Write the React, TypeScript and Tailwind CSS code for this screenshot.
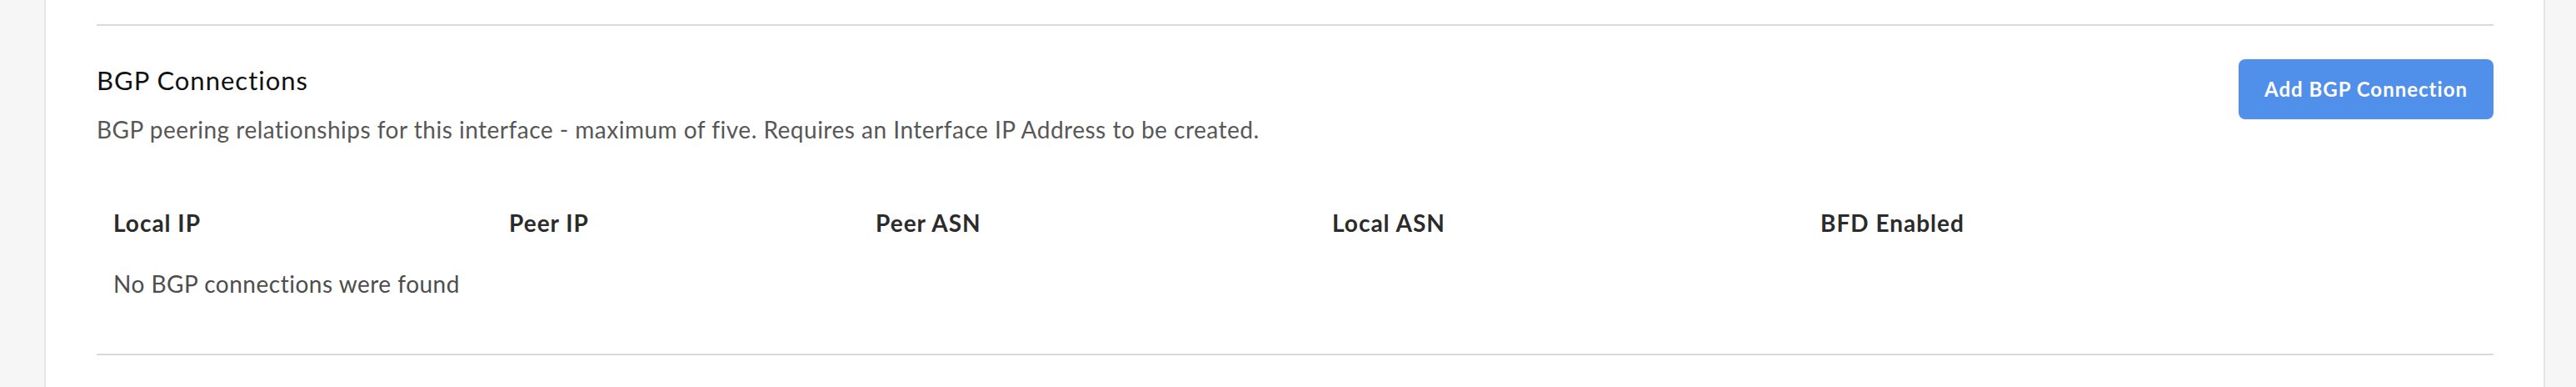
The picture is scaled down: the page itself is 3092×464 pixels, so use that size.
const columns = ["Local IP", "Peer IP", "Peer ASN", "Local ASN", "BFD Enabled"]

export default function App() {
  return (
    <div className="flex h-[464px] w-[3092px] bg-[#f6f6f6] font-['Lato',sans-serif]">
      <div className="w-[55px] shrink-0 border-r-2 border-[#e6e6e9]" />
      <main className="flex-1 bg-white pl-[61px] pr-[60px] pt-[29px]">
        <div className="h-[2px] bg-[#d9d9de]" />

        <section className="flex items-start justify-between pt-[40px]">
          <div className="pt-[7px]">
            <h2 className="text-[31px] leading-[36px] tracking-[1px] text-[#111111]">BGP Connections</h2>
            <p className="mt-[21px] text-[28px] leading-[40px] tracking-[0.5px] text-[#575757]">
              BGP peering relationships for this interface - maximum of five. Requires an Interface IP Address to be
              created.
            </p>
          </div>
          <button className="flex h-[72px] w-[306px] items-center justify-center rounded-[8px] bg-[#5190ea] text-[24px] font-bold tracking-[1px] text-white">
            Add BGP Connection
          </button>
        </section>

        <div className="mt-[72px] grid grid-cols-[475px_440px_548px_586px_1fr]">
          {columns.map((c) => (
            <div key={c} className="px-[20px] text-[28px] font-bold leading-[40px] tracking-[1px] text-[#2b2b2b]">
              {c}
            </div>
          ))}
          <div className="col-span-5 mt-[33px] px-[20px] text-[28px] leading-[40px] tracking-[0.5px] text-[#4d4d4d]">
            No BGP connections were found
          </div>
        </div>

        <div className="mt-[64px] h-[2px] bg-[#d9d9de]" />
      </main>
      <div className="w-[39px] shrink-0 border-l-2 border-[#e6e6e9]" />
    </div>
  )
}
